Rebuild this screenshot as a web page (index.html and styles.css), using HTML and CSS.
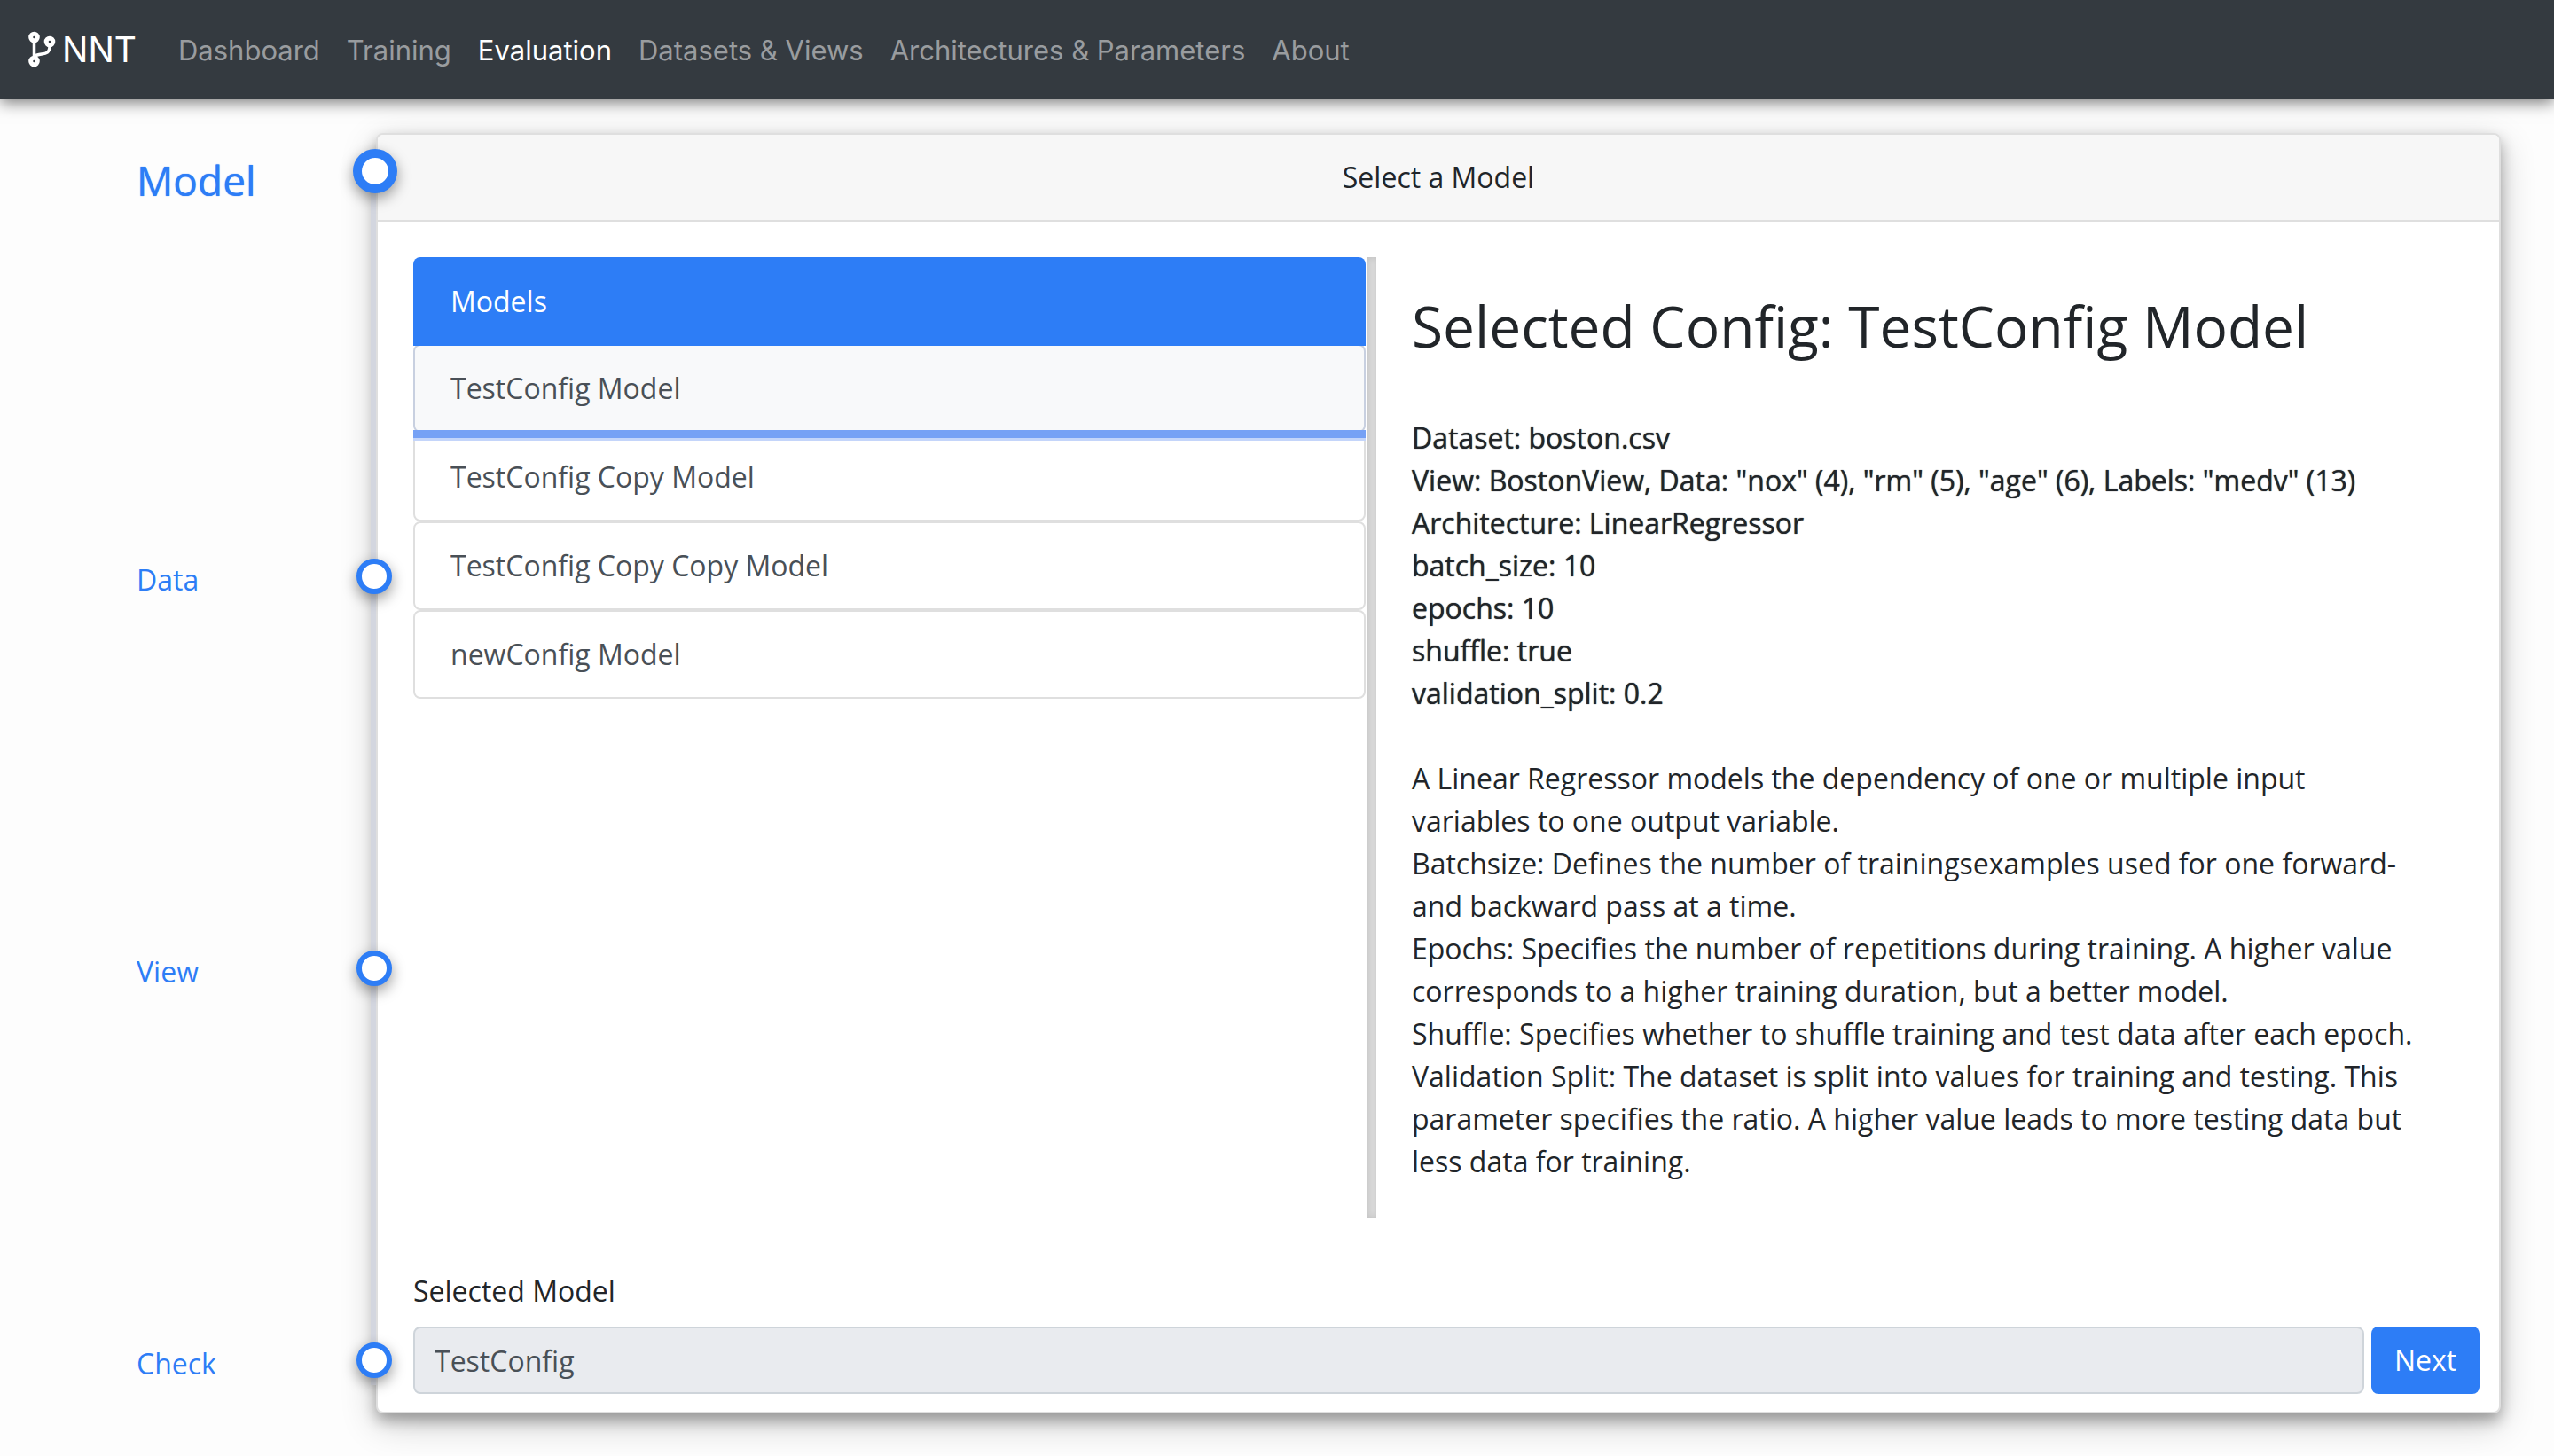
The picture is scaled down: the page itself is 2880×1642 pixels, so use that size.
FILE: index.html
```html
<!DOCTYPE html>
<html lang="en">
<head>
<meta charset="utf-8">
<title>NNT - Evaluation</title>
<link rel="stylesheet" href="styles.css">
</head>
<body>
<header class="navbar">
  <a class="brand" href="#">
    <svg class="brand-icon" viewBox="0 0 32 42" fill="none" stroke="currentColor" aria-hidden="true">
      <circle cx="6.500" cy="7" r="3.800" stroke-width="5"/>
      <circle cx="6.500" cy="34" r="3.800" stroke-width="5"/>
      <circle cx="24" cy="12" r="3.800" stroke-width="5"/>
      <path d="M6.500 12v18M24 17c0 10-7 8-14 10q-3 1-3.500 3" stroke-width="3.500"/>
    </svg>
    <span>NNT</span>
  </a>
  <nav class="nav">
    <a href="#">Dashboard</a>
    <a href="#">Training</a>
    <a class="active" href="#" aria-current="page">Evaluation</a>
    <a href="#">Datasets &amp; Views</a>
    <a href="#">Architectures &amp; Parameters</a>
    <a href="#">About</a>
  </nav>
</header>
<main class="page">
  <ol class="steps">
    <li class="step current"><a href="#">Model</a><span class="dot"></span></li>
    <li class="step"><a href="#">Data</a><span class="dot"></span></li>
    <li class="step"><a href="#">View</a><span class="dot"></span></li>
    <li class="step"><a href="#">Check</a><span class="dot"></span></li>
  </ol>
  <section class="card">
    <h2 class="card-header">Select a Model</h2>
    <div class="card-body">
      <div class="columns">
        <div class="models">
          <div class="models-title">Models</div>
          <button class="model selected" type="button">TestConfig Model</button>
          <button class="model" type="button">TestConfig Copy Model</button>
          <button class="model" type="button">TestConfig Copy Copy Model</button>
          <button class="model" type="button">newConfig Model</button>
        </div>
        <div class="divider"></div>
        <div class="details">
          <h1>Selected Config: TestConfig Model</h1>
          <p class="facts">Dataset: boston.csv<br>View: BostonView, Data: "nox" (4), "rm" (5), "age" (6), Labels: "medv" (13)<br>Architecture: LinearRegressor<br>batch_size: 10<br>epochs: 10<br>shuffle: true<br>validation_split: 0.2</p>
          <p>A Linear Regressor models the dependency of one or multiple input variables to one output variable.<br>Batchsize: Defines the number of trainingsexamples used for one forward- and backward pass at a time.<br>Epochs: Specifies the number of repetitions during training. A higher value corresponds to a higher training duration, but a better model.<br>Shuffle: Specifies whether to shuffle training and test data after each epoch.<br>Validation Split: The dataset is split into values for training and testing. This parameter specifies the ratio. A higher value leads to more testing data but less data for training.</p>
        </div>
      </div>
      <form class="chosen">
        <label for="selected-model">Selected Model</label>
        <div class="chosen-row">
          <input id="selected-model" type="text" value="TestConfig" readonly>
          <button class="next" type="button">Next</button>
        </div>
      </form>
    </div>
  </section>
</main>
</body>
</html>
```
FILE: styles.css
```css
* { box-sizing: border-box; }
body {
  margin: 0;
  min-height: 100vh;
  background: #fdfdfd;
  color: #212529;
  font: 32px/48px "Open Sans", sans-serif;
}
h1, h2, p, ol { margin: 0; padding: 0; font-weight: 400; }
a { text-decoration: none; }
button, input { font: inherit; }

/* Top navigation */
.navbar {
  position: relative;
  display: flex;
  align-items: center;
  gap: 32px;
  height: 112px;
  padding: 0 32px;
  background: #343a40;
  box-shadow: 0 4px 16px rgba(0, 0, 0, .5);
  font-family: Inter, sans-serif;
}
.brand {
  display: flex;
  align-items: center;
  gap: 6px;
  color: #fff;
  font-size: 39px;
}
.brand-icon { width: 32px; height: 42px; }
.nav { display: flex; padding-top: 2px; font-size: 31px; }
.nav a { padding: 0 15px; color: #999c9f; }
.nav .active { color: #fff; }

.page {
  display: grid;
  grid-template-columns: 424px minmax(0, 1fr);
  padding: 38px 60px 48px 0;
}

/* Step timeline */
.steps {
  position: relative;
  z-index: 1;
  display: grid;
  grid-template-rows: repeat(3, 442px) auto;
  list-style: none;
}
.steps::before {
  content: "";
  position: absolute;
  top: 44px;
  right: 0;
  bottom: 32px;
  width: 6px;
  background: #d3d6df;
}
.step {
  display: flex;
  justify-content: space-between;
  align-items: start;
  padding: 38px 0 0 154px;
}
.step a { color: #2d7df6; }
.dot {
  position: relative;
  width: 40px;
  height: 40px;
  margin-right: -18px;
  border: 6px solid #2d7df6;
  border-radius: 50%;
  background: #fff;
  box-shadow: 0 6px 16px rgba(0, 0, 0, .4);
}
.current { padding-top: 18px; }
.current a {
  font-size: 46px;
  line-height: 70px;
  text-shadow: 0 0 1px currentColor;
}
.current .dot {
  width: 50px;
  height: 50px;
  margin-right: -24px;
  border-width: 10px;
}

/* Card */
.card {
  border: 2px solid #dfdfdf;
  border-radius: 8px;
  background: #fff;
  box-shadow: 0 8px 16px rgba(0, 0, 0, .3), 0 12px 40px rgba(0, 0, 0, .2);
}
.card-header {
  padding: 24px 40px;
  border-bottom: 2px solid #dfdfdf;
  border-radius: 6px 6px 0 0;
  background: #f7f7f7;
  font-size: 32px;
  text-align: center;
}
.card-body { padding: 40px 22px 20px 40px; }
.columns {
  display: grid;
  grid-template-columns: minmax(0, 1076fr) 10px minmax(0, 1244fr);
}

/* Model list */
.models {
  align-self: start;
  margin-right: 2px;
}
.models-title {
  position: relative;
  z-index: 2;
  margin-bottom: -2px;
  padding: 26px 42px;
  border-radius: 8px 8px 0 0;
  background: #2d7df6;
  color: #fff;
}
.model {
  display: block;
  width: 100%;
  height: 100px;
  padding: 0 40px;
  border: 2px solid #dfdfdf;
  border-radius: 8px;
  background: #fff;
  color: #495057;
  text-align: left;
}
.selected {
  position: relative;
  z-index: 1;
  border-color: #c8d0e0;
  background: #f8f9fa;
}
/* Focus bar under the selected model, over the top edge of the next one */
.selected::after {
  content: "";
  position: absolute;
  right: -2px;
  bottom: -11px;
  left: -2px;
  height: 9px;
  border-bottom: 3px solid #c4d5fa;
  background: #76a1f5;
}
.divider {
  background: #dfdfdf;
  box-shadow: inset 1px 0 8px rgba(0, 0, 0, .15);
}

/* Configuration details */
.details { padding: 38px 66px 40px 40px; }
h1 { margin-bottom: 62px; font-size: 64px; line-height: 80px; }
.facts { margin-bottom: 48px; text-shadow: 0 0 1px currentColor; }

/* Selection form */
.chosen { padding-top: 58px; }
.chosen-row { display: flex; gap: 8px; margin-top: 16px; }
.chosen-row input {
  flex: 1;
  height: 76px;
  padding: 0 22px;
  border: 2px solid #ced4da;
  border-radius: 8px;
  background: #e9ebef;
  color: #495057;
}
.next {
  width: 122px;
  border: 0;
  border-radius: 8px;
  background: #2d7df6;
  color: #fff;
}
```
